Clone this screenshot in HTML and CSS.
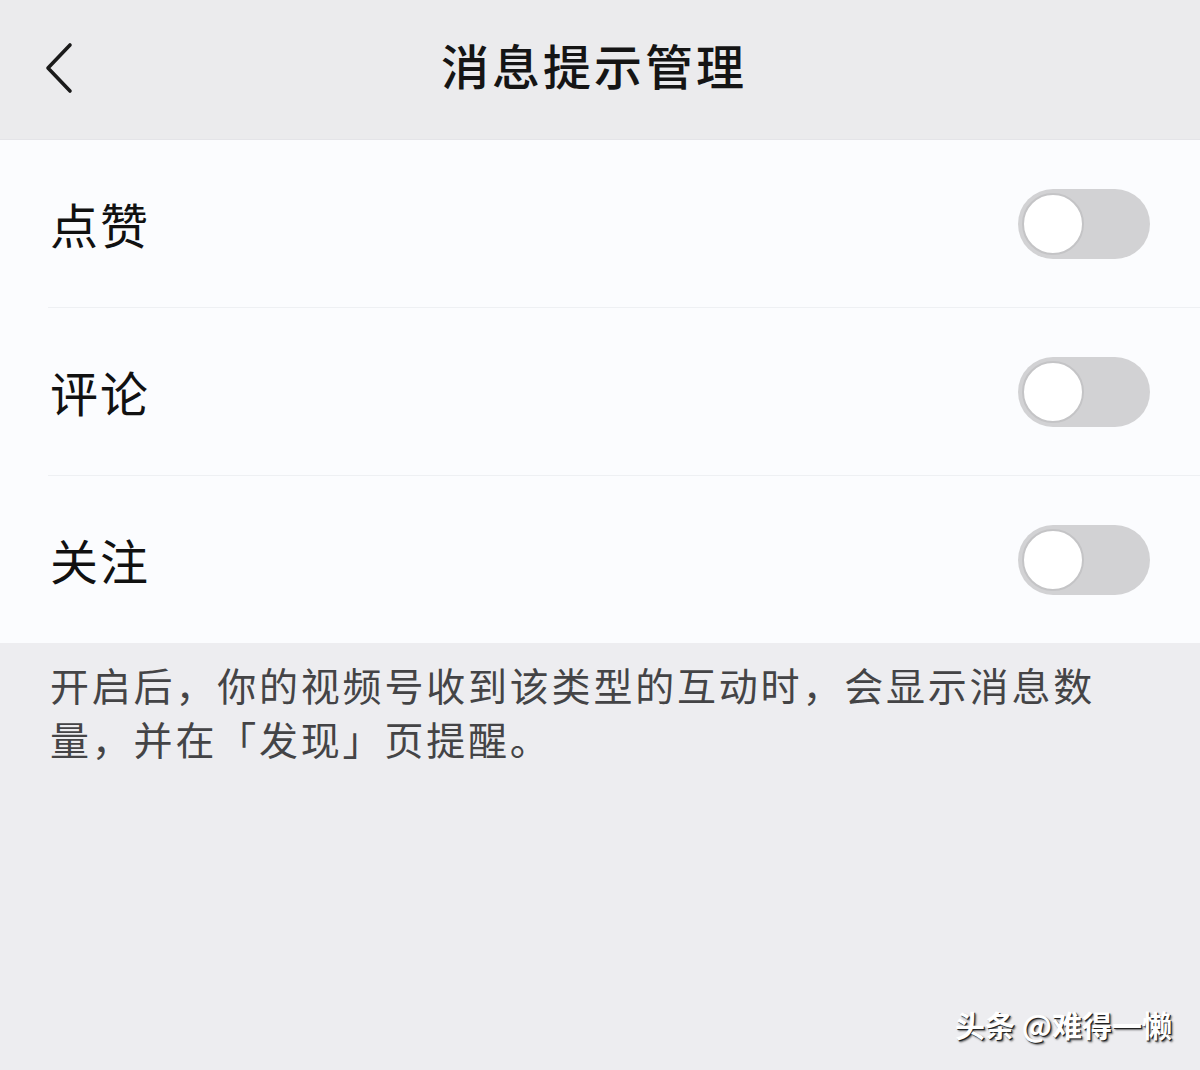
FILE: index.html
```html
<!DOCTYPE html>
<html lang="zh">
<head>
<meta charset="utf-8">
<link rel="stylesheet" href="styles.css">
</head>
<body>
<div class="page">
  <header class="nav">
    <svg class="back" width="30" height="52" viewBox="0 0 30 52"><path d="M26 3 L4 26 L26 49" fill="none" stroke="#1a1a1a" stroke-width="3.6" stroke-linecap="round" stroke-linejoin="round"/></svg>
    <h1 class="title">消息提示管理</h1>
  </header>
  <section class="list">
    <div class="row"><span class="label">点赞</span><span class="switch"><span class="knob"></span></span></div>
    <div class="row"><span class="label">评论</span><span class="switch"><span class="knob"></span></span></div>
    <div class="row"><span class="label">关注</span><span class="switch"><span class="knob"></span></span></div>
  </section>
  <p class="note">开启后，你的视频号收到该类型的互动时，会显示消息数量，并在「发现」页提醒。</p>
  <div class="mark">头条 @难得一懒</div>
</div>
</body>
</html>
```
FILE: styles.css
```css
html, body { margin: 0; padding: 0; }
body {
  background: #ededf0;
  font-family: "Noto Sans CJK SC", "Noto Sans", sans-serif;
  color: #111;
}
.page {
  position: relative;
  width: 1200px;
  height: 1070px;
  overflow: hidden;
}
.nav {
  position: relative;
  height: 139px;
  background: #ebebed;
  display: flex;
  align-items: center;
  justify-content: center;
  border-bottom: 1px solid #e4e4e8;
}
.back {
  position: absolute;
  left: 44px;
  top: 42px;
}
.title {
  margin: 0 12px 12px 0;
  font-size: 48px;
  font-weight: 500;
  letter-spacing: 3px;
  color: #151515;
}
.list {
  background: #fbfcfe;
}
.row {
  height: 167px;
  display: flex;
  align-items: center;
  justify-content: space-between;
  margin-left: 48px;
  padding: 0 50px 0 2px;
  border-bottom: 1px solid #eef0f3;
}
.row:last-child { border-bottom: none; }
.label {
  font-size: 48px;
  color: #111;
  letter-spacing: 2px;
  margin-bottom: 2px;
}
.switch {
  width: 132px;
  height: 70px;
  border-radius: 35px;
  background: #d2d2d4;
  box-sizing: border-box;
  padding: 4px;
  display: flex;
  align-items: center;
}
.knob {
  width: 62px;
  height: 62px;
  border-radius: 50%;
  background: #fff;
  box-sizing: border-box;
  border: 2px solid #c4c4c6;
}
.note {
  margin: 14px 0 0 0;
  padding: 0 90px 0 50px;
  font-size: 39px;
  line-height: 54px;
  letter-spacing: 2.8px;
  color: #444446;
}
.mark {
  position: absolute;
  right: 28px;
  bottom: 24px;
  font-size: 30px;
  font-weight: 700;
  color: #fff;
  text-shadow: 1px 1px 0 #222, 2px 2px 2px rgba(0,0,0,0.6);
  letter-spacing: 0;
}
```
